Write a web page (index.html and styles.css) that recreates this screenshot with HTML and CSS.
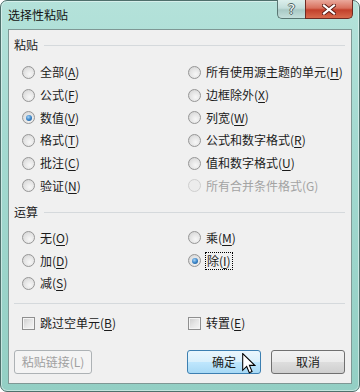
FILE: index.html
```html
<!DOCTYPE html>
<html lang="zh-CN">
<head>
    <meta charset="UTF-8">
    <meta name="viewport" content="width=device-width, initial-scale=1.0">
    <title>选择性粘贴</title>
    <link rel="stylesheet" href="styles.css">
</head>
<body>

    <!-- Ventana del diálogo -->
    <div class="window">
        <div class="titlebar">
            <span class="title">选择性粘贴</span>
            <div class="caption-btns">
                <span class="cap-btn help">?</span>
                <span class="cap-btn close">
                    <svg width="14" height="11" viewBox="0 0 14 11">
                        <path d="M2 1.5 L12 9.5 M12 1.5 L2 9.5" stroke="#5a1a12" stroke-width="4" stroke-linecap="square"/>
                        <path d="M2 1.5 L12 9.5 M12 1.5 L2 9.5" stroke="#fff" stroke-width="2.2" stroke-linecap="square"/>
                    </svg>
                </span>
            </div>
        </div>

        <div class="client">
            <!-- Pegar -->
            <div class="group-title"><span>粘贴</span><i></i></div>
            <div class="options">
                <label class="opt"><span class="radio"></span><span>全部(<u>A</u>)</span></label>
                <label class="opt"><span class="radio"></span><span>所有使用源主题的单元(<u>H</u>)</span></label>
                <label class="opt"><span class="radio"></span><span>公式(<u>F</u>)</span></label>
                <label class="opt"><span class="radio"></span><span>边框除外(<u>X</u>)</span></label>
                <label class="opt"><span class="radio checked"></span><span>数值(<u>V</u>)</span></label>
                <label class="opt"><span class="radio"></span><span>列宽(<u>W</u>)</span></label>
                <label class="opt"><span class="radio"></span><span>格式(<u>T</u>)</span></label>
                <label class="opt"><span class="radio"></span><span>公式和数字格式(<u>R</u>)</span></label>
                <label class="opt"><span class="radio"></span><span>批注(<u>C</u>)</span></label>
                <label class="opt"><span class="radio"></span><span>值和数字格式(<u>U</u>)</span></label>
                <label class="opt"><span class="radio"></span><span>验证(<u>N</u>)</span></label>
                <label class="opt disabled"><span class="radio"></span><span>所有合并条件格式(G)</span></label>
            </div>

            <!-- Operación -->
            <div class="group-title second"><span>运算</span><i></i></div>
            <div class="options ops">
                <label class="opt"><span class="radio"></span><span>无(<u>O</u>)</span></label>
                <label class="opt"><span class="radio"></span><span>乘(<u>M</u>)</span></label>
                <label class="opt"><span class="radio"></span><span>加(<u>D</u>)</span></label>
                <label class="opt"><span class="radio checked"></span><span class="focus">除(<u>I</u>)</span></label>
                <label class="opt"><span class="radio"></span><span>减(<u>S</u>)</span></label>
            </div>

            <div class="separator"></div>

            <div class="options checks">
                <label class="opt"><span class="checkbox"></span><span>跳过空单元(<u>B</u>)</span></label>
                <label class="opt"><span class="checkbox"></span><span>转置(<u>E</u>)</span></label>
            </div>

            <!-- Botones -->
            <div class="buttons">
                <button class="btn" disabled>粘贴链接(L)</button>
                <div class="right-btns">
                    <button class="btn default">确定
                        <svg class="cursor" width="14" height="21" viewBox="0 0 13 20">
                            <path d="M0.5 0.5 L0.5 16.5 L4.3 12.8 L6.8 18.8 L9.4 17.7 L6.9 11.8 L12 11.8 Z" fill="#fff" stroke="#000" stroke-width="1" stroke-linejoin="miter"/>
                        </svg>
                    </button>
                    <button class="btn">取消</button>
                </div>
            </div>
        </div>
    </div>

</body>
</html>
```

FILE: styles.css
```css
/* Estilos generales */
body {
    margin: 0;
    padding: 0;
    font-family: "Noto Sans CJK SC", "Noto Sans", sans-serif;
    font-size: 12px;
    line-height: 16px;
    color: #1b1b1b;
    background-color: #fff;
}

/* Marco de la ventana */
.window {
    width: 360px;
    height: 392px;
    box-sizing: border-box;
    border: 1px solid #4f706c;
    border-radius: 7px;
    padding: 0 7px 7px;
    background: linear-gradient(180deg, #b4e2da 0%, #a4dad1 35%, #93cfc4 100%);
    box-shadow: inset 0 0 0 1px rgba(255, 255, 255, 0.45);
    display: flex;
    flex-direction: column;
}

.titlebar {
    height: 28px;
    display: flex;
    justify-content: space-between;
    align-items: flex-start;
}

.title {
    margin-top: 6px;
    color: #111;
}

.caption-btns {
    display: flex;
    margin-top: -1px;
    margin-right: -1px;
}

.cap-btn {
    display: flex;
    align-items: center;
    justify-content: center;
    box-sizing: border-box;
    border: 1px solid #5a7773;
    border-top: none;
}

.help {
    width: 28px;
    height: 19px;
    border-radius: 0 0 0 5px;
    border-right: none;
    background: linear-gradient(180deg, #dcefec 0%, #c3dedb 45%, #a9c9c5 55%, #c4dfdb 100%);
    color: #f4f8f8;
    font-family: "DejaVu Sans", sans-serif;
    font-size: 14px;
    text-shadow: 1px 0 #4c6461, -1px 0 #4c6461, 0 1px #4c6461, 0 -1px #4c6461;
}

.close {
    width: 48px;
    height: 19px;
    border-color: #6d2b23;
    border-radius: 0 0 5px 0;
    background: linear-gradient(180deg, #eaa99c 0%, #d8705d 45%, #c2402b 55%, #d76a4c 100%);
}

/* Área cliente */
.client {
    flex: 1;
    border: 1px solid #7f9895;
    background-color: #f0f0f0;
    padding: 7px 6px 0 5px;
}

.group-title {
    display: flex;
    align-items: center;
}

.group-title i {
    flex: 1;
    margin-left: 6px;
    border-top: 1px solid #d5d9dc;
}

.group-title.second {
    margin-top: 7px;
}

.options {
    display: grid;
    grid-template-columns: 166px 1fr;
    grid-auto-rows: 22.7px;
    margin-top: 8px;
    padding-left: 8px;
}

.options.ops {
    margin-top: 6.5px;
}

.options.checks {
    margin-top: 8px;
}

.opt {
    display: flex;
    align-items: center;
    gap: 5px;
    white-space: nowrap;
}

.opt u {
    text-underline-offset: 2px;
}

.opt.disabled {
    color: #a3a3a3;
}

.focus {
    outline: 1px dotted #000;
    outline-offset: 0;
    padding: 0 1px;
}

/* Botones de opción */
.radio {
    width: 13px;
    height: 13px;
    box-sizing: border-box;
    border-radius: 50%;
    border: 1px solid #969696;
    background: radial-gradient(circle at 60% 65%, #f7f7f7 0%, #e3e3e3 55%, #cdcdcd 100%);
    position: relative;
}

.radio.checked::after {
    content: "";
    position: absolute;
    left: 2.5px;
    top: 2.5px;
    width: 6px;
    height: 6px;
    border-radius: 50%;
    background: radial-gradient(circle at 40% 35%, #a6d4f7 0%, #3d86c8 50%, #164f88 100%);
}

.disabled .radio {
    border-color: #cfcfcf;
    background: #ececec;
}

.checkbox {
    width: 13px;
    height: 13px;
    box-sizing: border-box;
    border: 1px solid #8f8f8f;
    background: linear-gradient(135deg, #cbcbcb 0%, #e6e6e6 50%, #f6f6f6 100%);
    box-shadow: inset 0 0 0 1px #f4f4f4;
}

.separator {
    margin-top: 8px;
    border-top: 1px solid #d5d9dc;
    margin-right: 0;
}

/* Botones */
.buttons {
    display: flex;
    justify-content: space-between;
    margin-top: 15.5px;
}

.right-btns {
    display: flex;
    gap: 10px;
}

.btn {
    position: relative;
    width: 74px;
    height: 24px;
    border: 1px solid #707070;
    border-radius: 3px;
    background: linear-gradient(180deg, #f2f2f2 0%, #ebebeb 48%, #dddddd 52%, #cfcfcf 100%);
    font-family: "Noto Sans CJK SC", "Noto Sans", sans-serif;
    font-size: 12px;
    color: #1b1b1b;
    padding: 0;
}

.btn[disabled] {
    width: 78px;
    border-color: #adb2b5;
    background: #f4f4f4;
    color: #a0a0a0;
}

.btn.default {
    border-color: #3c7fb1;
    background: linear-gradient(180deg, #eaf6fd 0%, #d9f0fc 48%, #bee6fd 52%, #a7d9f5 100%);
}

.cursor {
    position: absolute;
    left: 54px;
    top: 2px;
}
```
